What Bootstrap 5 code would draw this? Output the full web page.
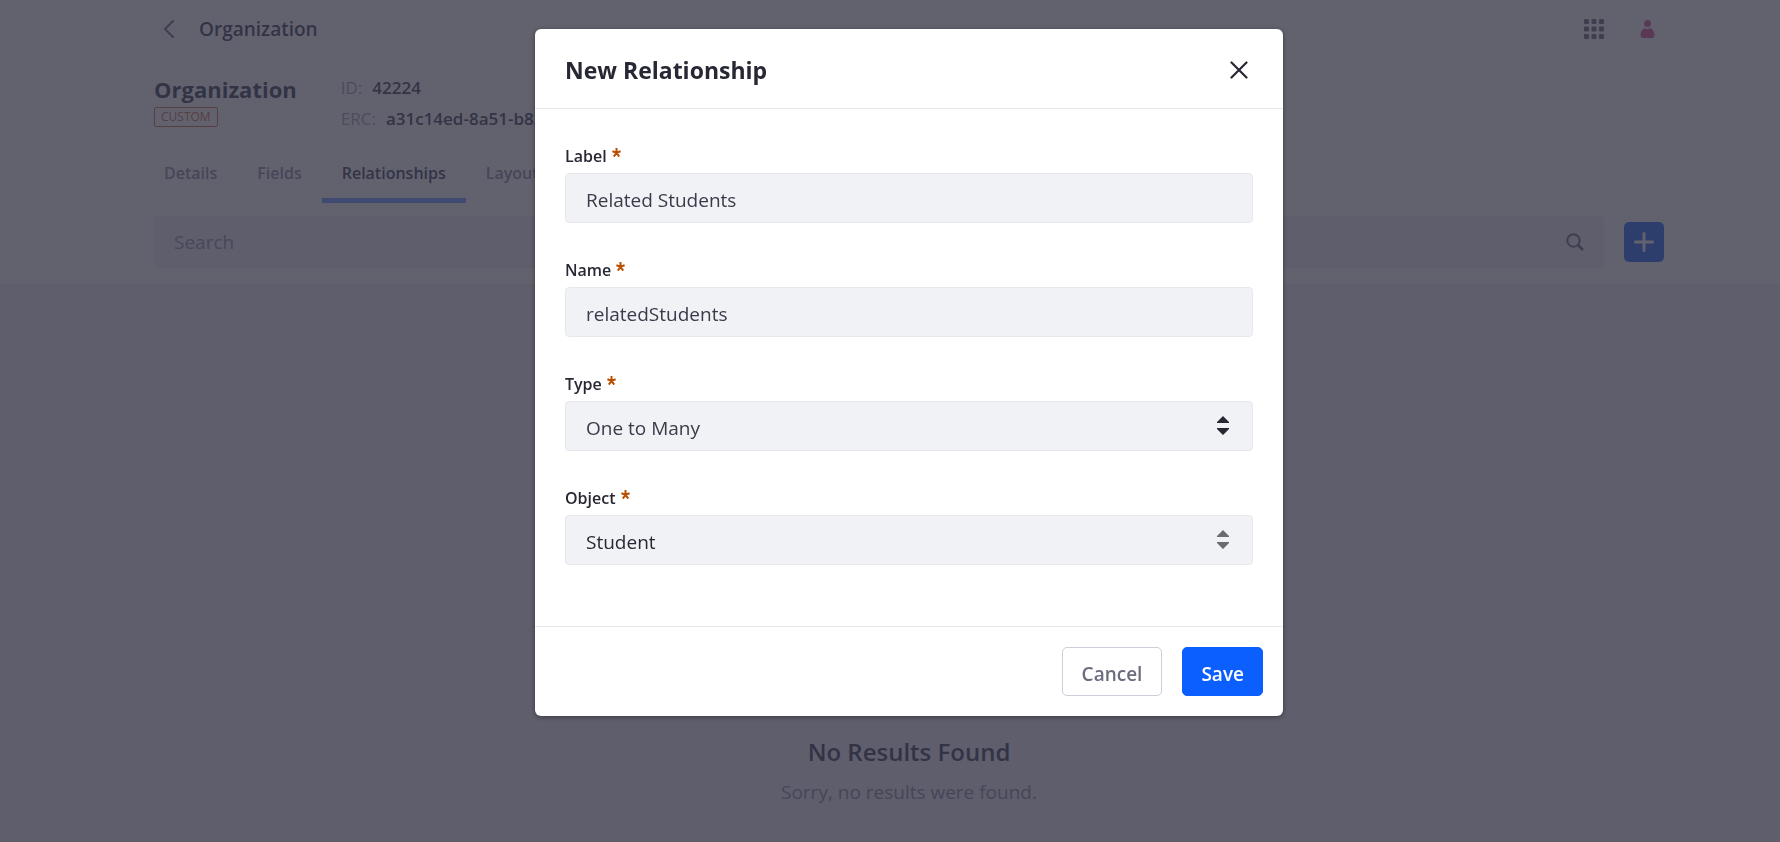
<!DOCTYPE html>
<html lang="en">
<head>
<meta charset="utf-8">
<meta name="viewport" content="width=device-width, initial-scale=1">
<title>Organization - New Relationship</title>
<link href="https://cdn.jsdelivr.net/npm/bootstrap@5.3.0/dist/css/bootstrap.min.css" rel="stylesheet">
<style>
  :root { --rail: 38px; --ink: #272833; --ink-soft: #5c5d70; --muted: #6b6c7e; --muted-soft: #9c9dac; --line: #e7e7ed; }
  body { font-family: "Open Sans", "Noto Sans", sans-serif; font-size: 18px; line-height: 24px; color: var(--ink-soft); background: #f1f1f5; overflow: hidden; }
  .shell { padding-left: var(--rail); }
  .page-width { max-width: 1510px; margin: 0 auto; }
  .topbar { height: 58px; }
  .topbar-tools { gap: 36px; padding-right: 9px; }
  .back-btn { width: 30px; height: 30px; }
  .bar-title { font-size: 19px; font-weight: 600; margin-left: 15px; }
  .object-head { gap: 44px; padding-top: 14px; }
  .object-name { font-size: 22px; line-height: 35px; font-weight: 700; }
  .kind-tag { font-size: 12px; line-height: 18px; color: #d8805c; border: 1px solid #d8805c; border-radius: 2px; padding: 0 6px; }
  .meta-row { font-size: 17px; line-height: 31px; gap: 10px; }
  .meta-row dt { font-weight: 400; color: #b0b1bd; }
  .meta-row dd { font-weight: 600; }
  .object-tabs { margin: 9px 0 0 -10px; }
  .object-tabs .nav-link { font-size: 16px; line-height: 24px; font-weight: 600; color: var(--muted-soft); padding: 18px 20px 13px; border-bottom: 5px solid transparent; border-radius: 0; }
  .object-tabs .nav-link.active { color: var(--ink-soft); border-bottom-color: #80acff; }
  .tool-row { padding: 13px 0 16px; gap: 20px; }
  .search-box { height: 52px; background: #f1f1f5; border-radius: 4px; padding: 0 20px; }
  .search-box input { background: transparent; border: 0; font-size: 19px; padding: 0; box-shadow: none; }
  .search-box input::placeholder { color: #a4a5b3; opacity: 1; }
  .add-btn { width: 40px; height: 40px; background: #4a80f4; border-radius: 5px; }
  .empty-state { padding-top: 449px; }
  .empty-state h2 { font-size: 24px; line-height: 38px; font-weight: 600; }
  .empty-state p { font-size: 19px; line-height: 28px; color: var(--muted-soft); margin-top: 7px; }

  .modal-backdrop { --bs-backdrop-bg: #232335; --bs-backdrop-opacity: .713; width: 100%; height: 100%; }
  .modal.relationship { --bs-modal-width: 748px; --bs-modal-margin: 29px; padding-left: var(--rail); overflow: hidden; }
  .relationship .modal-content { border: 0; border-radius: 6px; box-shadow: 0 1px 5px rgba(0, 0, 0, .4); color: var(--ink); }
  .relationship .modal-header { height: 80px; padding: 2px 30px 0; border-color: var(--line); }
  .relationship .modal-title { font-size: 23px; line-height: 36px; font-weight: 700; }
  .close-btn { width: 40px; height: 40px; margin-right: -6px; }
  .relationship .modal-body { padding: 35px 30px 26px; }
  .field { margin-bottom: 35px; }
  .field label { font-size: 16px; line-height: 24px; font-weight: 600; margin-bottom: 5px; gap: 5px; }
  .field .form-control, .field .form-select { height: 50px; padding: 3px 20px 0; font-size: 19px; line-height: 28px; color: #393a4a; background-color: #f1f2f5; border: 1px solid var(--line); border-radius: 4px; }
  .field .form-select { background-size: 12px 20px; background-position: right 23px center; background-image: url("data:image/svg+xml,%3Csvg xmlns='http://www.w3.org/2000/svg' viewBox='0 0 12 20'%3E%3Cpath fill='%23272833' d='M6 0 12 6v1H0V6zM0 12h12v1l-6 6-6-6z'/%3E%3C/svg%3E"); }
  .field .picker { color: var(--ink); background-image: url("data:image/svg+xml,%3Csvg xmlns='http://www.w3.org/2000/svg' viewBox='0 0 12 20'%3E%3Cpath fill='%236b6c72' d='M6 0 12 6v1H0V6zM0 12h12v1l-6 6-6-6z'/%3E%3C/svg%3E"); }
  .relationship .modal-footer { padding: 20px; gap: 20px; border-color: var(--line); }
  .relationship .modal-footer > * { margin: 0; }
  .relationship .modal-footer .btn { height: 49px; font-size: 19px; line-height: 28px; font-weight: 600; border-radius: 5px; padding: 4px 18px 0; }
  .relationship .modal-footer .btn-cancel { color: var(--muted); background: #fff; border: 1px solid #cdced9; padding: 4px 19px 0; }
  .btn-save { color: #fff; background: #0b5fff; border: 1px solid #0b5fff; }
</style>
</head>
<body>
<div class="shell bg-white">
  <div class="page-width">
    <header class="topbar d-flex align-items-center">
      <button type="button" class="back-btn btn p-0 border-0 d-flex align-items-center justify-content-center" aria-label="Back">
        <svg width="12" height="18" viewBox="0 0 12 18" fill="none" stroke="#80818f" stroke-width="2" stroke-linecap="round"><path d="M10 1 2 9l8 8"/></svg>
      </button>
      <span class="bar-title">Organization</span>
      <div class="topbar-tools ms-auto d-flex align-items-center">
        <button type="button" class="btn p-0 border-0 d-flex" aria-label="Applications">
          <svg width="20" height="20" viewBox="0 0 20 20" fill="#80818f"><rect width="5" height="5" rx="1"/><rect x="7.5" width="5" height="5" rx="1"/><rect x="15" width="5" height="5" rx="1"/><rect y="7.5" width="5" height="5" rx="1"/><rect x="7.5" y="7.5" width="5" height="5" rx="1"/><rect x="15" y="7.5" width="5" height="5" rx="1"/><rect y="15" width="5" height="5" rx="1"/><rect x="7.5" y="15" width="5" height="5" rx="1"/><rect x="15" y="15" width="5" height="5" rx="1"/></svg>
        </button>
        <button type="button" class="btn p-0 border-0 d-flex" aria-label="User menu">
          <svg width="15" height="18" viewBox="0 0 15 18" fill="#e070a4"><circle cx="7.5" cy="3.5" r="3.500"/><path d="M4.500 8q3 2 6 0 4 3 4 7 0 3-2.500 3H3Q.5 18 .5 15q0-4 4-7z"/></svg>
        </button>
      </div>
    </header>

    <section class="object-head d-flex align-items-start">
      <div class="d-flex flex-column align-items-start">
        <h1 class="object-name mb-0">Organization</h1>
        <span class="kind-tag">CUSTOM</span>
      </div>
      <dl class="mb-0">
        <div class="meta-row d-flex"><dt>ID:</dt><dd class="mb-0">42224</dd></div>
        <div class="meta-row d-flex"><dt>ERC:</dt><dd class="mb-0">a31c14ed-8a51-b83</dd></div>
      </dl>
    </section>

    <nav class="object-tabs nav" aria-label="Object sections">
      <a class="nav-link" href="#details">Details</a>
      <a class="nav-link" href="#fields">Fields</a>
      <a class="nav-link active" href="#relationships" aria-current="page">Relationships</a>
      <a class="nav-link" href="#layouts">Layouts</a>
    </nav>

    <div class="tool-row d-flex align-items-center">
      <div class="search-box d-flex align-items-center flex-grow-1">
        <input class="form-control" type="search" placeholder="Search" aria-label="Search">
        <svg class="flex-shrink-0" width="18" height="18" viewBox="0 0 18 18" fill="none" stroke="#80818f" stroke-width="2"><circle cx="7.500" cy="7.500" r="6.200"/><path d="m12 12 5 5" stroke-width="2.600"/></svg>
      </div>
      <button type="button" class="add-btn btn p-0 border-0 d-flex align-items-center justify-content-center" aria-label="Add relationship">
        <svg width="20" height="20" viewBox="0 0 20 20" stroke="#fff" stroke-width="3" stroke-linecap="round"><path d="M10 1.500v17M1.500 10h17"/></svg>
      </button>
    </div>
  </div>
</div>

<main class="shell">
  <div class="empty-state text-center">
    <h2 class="mb-0">No Results Found</h2>
    <p class="mb-0">Sorry, no results were found.</p>
  </div>
</main>

<div class="modal-backdrop show"></div>
<div class="modal relationship d-block" tabindex="-1" role="dialog" aria-modal="true" aria-labelledby="dialogTitle">
  <div class="modal-dialog">
    <form class="modal-content">
      <div class="modal-header">
        <h2 class="modal-title" id="dialogTitle">New Relationship</h2>
        <button type="button" class="close-btn btn p-0 border-0 d-flex align-items-center justify-content-center" aria-label="Close">
          <svg width="18" height="18" viewBox="0 0 18 18" stroke="#272833" stroke-width="2.200" stroke-linecap="round"><path d="m1.500 1.500 15 15M16.500 1.500l-15 15"/></svg>
        </button>
      </div>
      <div class="modal-body">
        <div class="field">
          <label class="d-flex" for="relLabel">Label <svg class="mt-1" width="9" height="9" viewBox="0 0 9 9" stroke="#b95000" stroke-width="2"><path d="M4.500 0v4.800M.4 3.300l4.100 1.500 4.100-1.500M1.800 8.600l2.700-3.800 2.700 3.800" fill="none"/></svg></label>
          <input class="form-control" id="relLabel" type="text" value="Related Students" required>
        </div>
        <div class="field">
          <label class="d-flex" for="relName">Name <svg class="mt-1" width="9" height="9" viewBox="0 0 9 9" stroke="#b95000" stroke-width="2"><path d="M4.500 0v4.800M.4 3.300l4.100 1.500 4.100-1.500M1.800 8.600l2.700-3.800 2.700 3.800" fill="none"/></svg></label>
          <input class="form-control" id="relName" type="text" value="relatedStudents" required>
        </div>
        <div class="field">
          <label class="d-flex" for="relType">Type <svg class="mt-1" width="9" height="9" viewBox="0 0 9 9" stroke="#b95000" stroke-width="2"><path d="M4.500 0v4.800M.4 3.300l4.100 1.500 4.100-1.500M1.800 8.600l2.700-3.800 2.700 3.800" fill="none"/></svg></label>
          <select class="form-select" id="relType"><option>One to Many</option></select>
        </div>
        <div class="field">
          <label class="d-flex" for="relObject">Object <svg class="mt-1" width="9" height="9" viewBox="0 0 9 9" stroke="#b95000" stroke-width="2"><path d="M4.500 0v4.800M.4 3.300l4.100 1.500 4.100-1.500M1.800 8.600l2.700-3.800 2.700 3.800" fill="none"/></svg></label>
          <select class="form-select picker" id="relObject"><option>Student</option></select>
        </div>
      </div>
      <div class="modal-footer">
        <button type="button" class="btn btn-cancel">Cancel</button>
        <button type="submit" class="btn btn-save">Save</button>
      </div>
    </form>
  </div>
</div>
<script src="https://cdn.jsdelivr.net/npm/bootstrap@5.3.0/dist/js/bootstrap.bundle.min.js"></script>
</body>
</html>
